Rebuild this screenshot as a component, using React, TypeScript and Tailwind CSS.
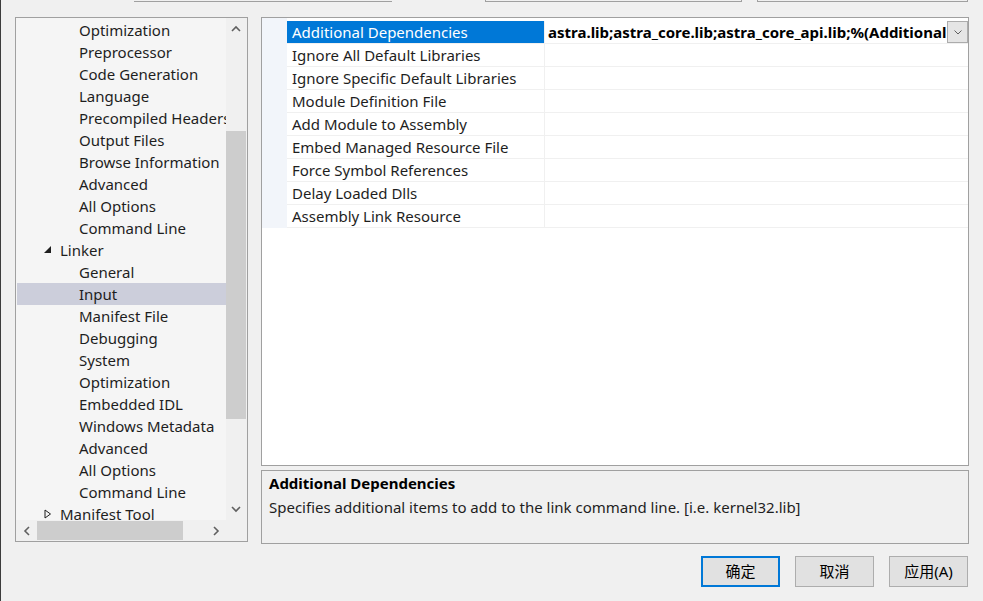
import React from "react";

const font = { fontFamily: '"Noto Sans", "Noto Sans CJK SC", sans-serif' };

type TreeRow = { label: string; level: 1 | 2; toggle?: "open" | "closed"; selected?: boolean };

const tree: TreeRow[] = [
  { label: "Optimization", level: 2 },
  { label: "Preprocessor", level: 2 },
  { label: "Code Generation", level: 2 },
  { label: "Language", level: 2 },
  { label: "Precompiled Headers", level: 2 },
  { label: "Output Files", level: 2 },
  { label: "Browse Information", level: 2 },
  { label: "Advanced", level: 2 },
  { label: "All Options", level: 2 },
  { label: "Command Line", level: 2 },
  { label: "Linker", level: 1, toggle: "open" },
  { label: "General", level: 2 },
  { label: "Input", level: 2, selected: true },
  { label: "Manifest File", level: 2 },
  { label: "Debugging", level: 2 },
  { label: "System", level: 2 },
  { label: "Optimization", level: 2 },
  { label: "Embedded IDL", level: 2 },
  { label: "Windows Metadata", level: 2 },
  { label: "Advanced", level: 2 },
  { label: "All Options", level: 2 },
  { label: "Command Line", level: 2 },
  { label: "Manifest Tool", level: 1, toggle: "closed" },
];

const props = [
  "Additional Dependencies",
  "Ignore All Default Libraries",
  "Ignore Specific Default Libraries",
  "Module Definition File",
  "Add Module to Assembly",
  "Embed Managed Resource File",
  "Force Symbol References",
  "Delay Loaded Dlls",
  "Assembly Link Resource",
];

function Chevron({ dir }: { dir: "up" | "down" | "left" | "right" }) {
  const d = {
    up: "M1 6 L5 2 L9 6",
    down: "M1 2 L5 6 L9 2",
    left: "M6 1 L2 5 L6 9",
    right: "M2 1 L6 5 L2 9",
  }[dir];
  const vertical = dir === "up" || dir === "down";
  return (
    <svg width={vertical ? 10 : 8} height={vertical ? 8 : 10} viewBox={vertical ? "0 0 10 8" : "0 0 8 10"}>
      <path d={d} fill="none" stroke="#606060" strokeWidth="1.6" />
    </svg>
  );
}

function TreePanel() {
  return (
    <div className="flex h-[525px] w-[233px] shrink-0 flex-col border border-[#a0a0a0] bg-[#f5f5f5]">
      <div className="flex min-h-0 flex-1">
        <div className="min-w-0 flex-1 overflow-hidden pt-px pl-px">
          {tree.map((r, i) => (
            <div
              key={i}
              className={`flex h-[22px] shrink-0 items-center whitespace-nowrap text-[15px] text-[#1e1e1e] ${
                r.selected ? "bg-[#cccedb]" : ""
              }`}
            >
              {r.level === 1 ? (
                <>
                  <span className="ml-[27px] flex w-[16px] items-center">
                    {r.toggle === "open" ? (
                      <svg width="8" height="8" viewBox="0 0 8 8">
                        <path d="M7 0 L7 7 L0 7 Z" fill="#1e1e1e" />
                      </svg>
                    ) : (
                      <svg width="8" height="10" viewBox="0 0 8 10">
                        <path d="M1 1 L6.5 5 L1 9 Z" fill="none" stroke="#1e1e1e" strokeWidth="1" />
                      </svg>
                    )}
                  </span>
                  <span>{r.label}</span>
                </>
              ) : (
                <span className="ml-[62px]">{r.label}</span>
              )}
            </div>
          ))}
        </div>
        <div className="flex w-[21px] shrink-0 flex-col bg-[#f0f0f0] pr-px">
          <div className="flex h-[22px] items-center justify-center">
            <Chevron dir="up" />
          </div>
          <div className="flex-1 pt-[91px] pb-[79px]">
            <div className="h-full w-full bg-[#cdcdcd]" />
          </div>
          <div className="flex h-[22px] items-center justify-center">
            <Chevron dir="down" />
          </div>
        </div>
      </div>
      <div className="flex h-[21px] shrink-0 bg-[#f0f0f0]">
        <div className="flex w-[21px] items-center justify-center">
          <Chevron dir="left" />
        </div>
        <div className="flex flex-1 items-stretch py-px">
          <div className="w-[146px] bg-[#cdcdcd]" />
        </div>
        <div className="flex w-[21px] items-center justify-center">
          <Chevron dir="right" />
        </div>
        <div className="w-[21px]" />
      </div>
    </div>
  );
}

function PropertyGrid() {
  return (
    <div className="h-[449px] border border-[#a0a0a0] bg-white">
      <div className="h-[3px] w-[25px] bg-[#f2f5fa]" />
      {props.map((p, i) => (
        <div key={p} className="flex h-[23px] text-[15px]">
          <div className="w-[25px] shrink-0 bg-[#f2f5fa]" />
          <div
            className={`flex w-[258px] shrink-0 items-center border-r border-b border-[#f0f0f0] pl-[5px] whitespace-nowrap ${
              i === 0 ? "bg-[#0078d7] text-white" : "text-[#1e1e1e]"
            }`}
          >
            {p}
          </div>
          <div className="flex min-w-0 flex-1 items-center overflow-hidden border-b border-[#f0f0f0]">
            {i === 0 && (
              <>
                <div className="min-w-0 flex-1 overflow-hidden pl-[3px] font-bold whitespace-nowrap text-black">
                  astra.lib;astra_core.lib;astra_core_api.lib;%(AdditionalDependencies)
                </div>
                <div className="flex h-[22px] w-[21px] shrink-0 items-center justify-center border border-[#acacac] bg-[#e5e5e5]">
                  <svg width="8" height="5" viewBox="0 0 8 5">
                    <path d="M0.5 0.5 L4 4 L7.5 0.5" fill="none" stroke="#606060" strokeWidth="1" />
                  </svg>
                </div>
              </>
            )}
          </div>
        </div>
      ))}
    </div>
  );
}

function Btn({ label, primary }: { label: string; primary?: boolean }) {
  return (
    <button
      className={`flex h-[31px] w-[79px] items-center justify-center bg-[#e1e1e1] text-[15px] text-black ${
        primary ? "border-2 border-[#0078d7]" : "border border-[#adadad]"
      }`}
    >
      {label}
    </button>
  );
}

export default function App() {
  return (
    <div className="h-[601px] w-[983px] overflow-hidden border-l border-[#3c3c3c] bg-[#f0f0f0]" style={font}>
      <div className="flex h-[17px] items-start">
        <div className="ml-[133px] h-[2px] w-[258px] border-b border-[#a0a0a0]" />
        <div className="ml-[93px] h-[2px] w-[257px] border-x border-b border-[#a0a0a0]" />
        <div className="ml-[15px] h-[2px] w-[211px] border-x border-b border-[#a0a0a0]" />
      </div>
      <div className="flex gap-[13px] pl-[14px]">
        <TreePanel />
        <div className="flex w-[708px] shrink-0 flex-col gap-[4px]">
          <PropertyGrid />
          <div className="h-[74px] border border-[#a0a0a0] bg-[#f0f0f0] px-[7px] text-[15px] leading-[24px] text-[#1e1e1e]">
            <div className="font-bold text-black">Additional Dependencies</div>
            <div>Specifies additional items to add to the link command line. [i.e. kernel32.lib]</div>
          </div>
        </div>
      </div>
      <div className="mt-[12px] flex justify-end gap-[15px] pr-[15px]">
        <Btn label="确定" primary />
        <Btn label="取消" />
        <Btn label="应用(A)" />
      </div>
    </div>
  );
}
